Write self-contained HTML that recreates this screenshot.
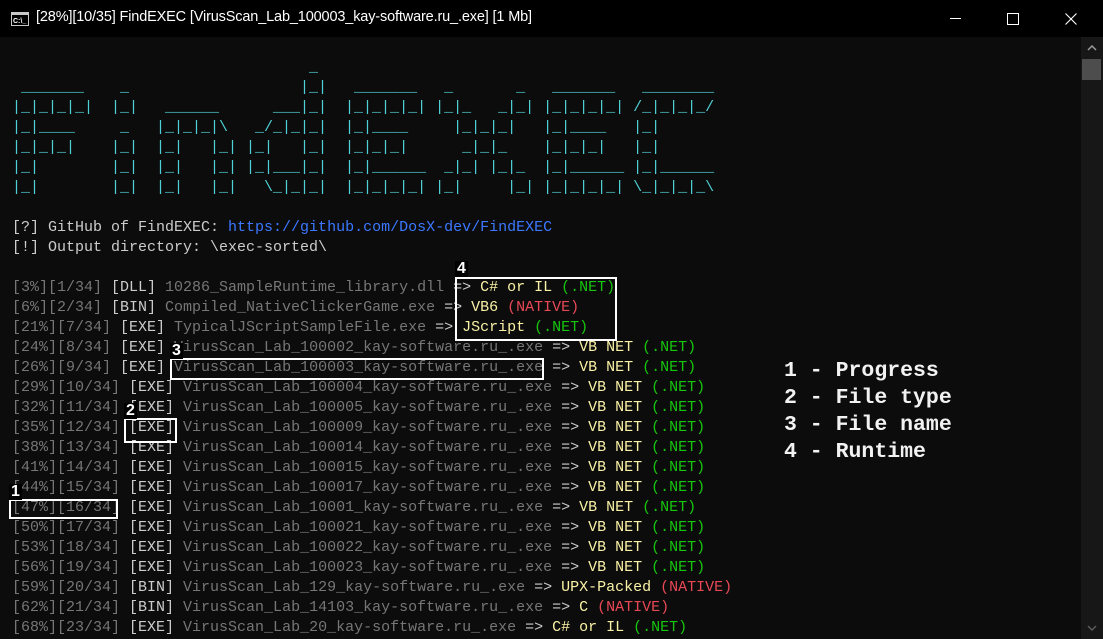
<!DOCTYPE html>
<html><head><meta charset="utf-8"><style>
html,body{margin:0;padding:0;}
body{width:1103px;height:639px;background:#0c0c0c;position:relative;overflow:hidden;font-family:"Liberation Mono",monospace;}
#tb{position:absolute;left:0;top:0;width:1103px;height:37px;background:#000;}
#title{position:absolute;left:36px;top:9px;color:#fff;font:14.5px "Liberation Sans",sans-serif;white-space:pre;letter-spacing:-0.15px;}
.l{position:absolute;left:12px;white-space:pre;font-size:15px;line-height:20px;height:20px;color:#cccccc;}
.art{color:#4fd0d6;}
.d{color:#767676}.w{color:#cccccc}.y{color:#f9f1a5}.g{color:#16c60c}.r{color:#e74856}.b{color:#3b78ff}
.box{position:absolute;border:2px solid #fff;box-sizing:border-box;}
.num{position:absolute;background:#000;color:#fff;font:bold 16px "Liberation Sans",sans-serif;line-height:16px;padding:0 2px;}
#leg{position:absolute;left:784px;top:358px;color:#f2f2f2;font:bold 21.5px "Liberation Mono",monospace;line-height:27px;white-space:pre;}
#sb{position:absolute;left:1081px;top:37px;width:22px;height:602px;background:#171717;}
</style></head><body>
<div id="tb">
<svg style="position:absolute;left:11px;top:12px" width="18" height="14" viewBox="0 0 18 14"><rect x="0.5" y="0.5" width="17" height="13" fill="#000" stroke="#c8c8c8"/><rect x="1" y="1" width="16" height="2" fill="#c8c8c8"/><text x="2" y="11" fill="#fff" font-size="7" font-family="Liberation Sans" font-weight="bold">C:\_</text></svg>
<div id="title">[28%][10/35] FindEXEC [VirusScan_Lab_100003_kay-software.ru_.exe] [1 Mb]</div>
<div style="position:absolute;left:950px;top:18px;width:11px;height:1px;background:#fff"></div>
<div style="position:absolute;left:1007px;top:13px;width:10px;height:10px;border:1px solid #fff"></div>
<svg style="position:absolute;left:1065px;top:13px" width="12" height="12"><path d="M0.5 0.5L11.5 11.5M11.5 0.5L0.5 11.5" stroke="#fff" stroke-width="1.1"/></svg>
</div>
<div id="sb">
<svg style="position:absolute;left:6px;top:8px" width="10" height="6"><path d="M1 5L5 1L9 5" stroke="#9a9a9a" stroke-width="1.5" fill="none"/></svg>
<div style="position:absolute;left:1px;top:22px;width:19px;height:21px;background:#4d4d4d"></div>
<svg style="position:absolute;left:6px;top:588px" width="10" height="6"><path d="M1 1L5 5L9 1" stroke="#5a5a5a" stroke-width="1.5" fill="none"/></svg>
</div>

<div class="l art" style="top:58px">                                 _</div>
<div class="l art" style="top:78px"> _______    _                   |_|   _______   _       _   _______   ________</div>
<div class="l art" style="top:98px">|_|_|_|_|  |_|   ______      ___|_|  |_|_|_|_| |_|_   _|_| |_|_|_|_| /_|_|_|_/</div>
<div class="l art" style="top:118px">|_|____     _   |_|_|_|\   _/_|_|_|  |_|____     |_|_|_|   |_|____   |_|</div>
<div class="l art" style="top:138px">|_|_|_|    |_|  |_|   |_| |_|   |_|  |_|_|_|      _|_|_    |_|_|_|   |_|</div>
<div class="l art" style="top:158px">|_|        |_|  |_|   |_| |_|___|_|  |_|______  _|_| |_|_  |_|______ |_|______</div>
<div class="l art" style="top:178px">|_|        |_|  |_|   |_|   \_|_|_|  |_|_|_|_| |_|     |_| |_|_|_|_| \_|_|_|_\</div>

<div class="l" style="top:218px">[?] GitHub of FindEXEC: <span class="b">https://github.com/DosX-dev/FindEXEC</span></div>
<div class="l" style="top:238px">[!] Output directory: \exec-sorted\</div>

<div class="l" style="top:278px"><span class="d">[3%][1/34]</span> [DLL] <span class="d">10286_SampleRuntime_library.dll</span> => <span class="y">C# or IL</span> <span class="g">(.NET)</span></div>
<div class="l" style="top:298px"><span class="d">[6%][2/34]</span> [BIN] <span class="d">Compiled_NativeClickerGame.exe</span> => <span class="y">VB6</span> <span class="r">(NATIVE)</span></div>
<div class="l" style="top:318px"><span class="d">[21%][7/34]</span> [EXE] <span class="d">TypicalJScriptSampleFile.exe</span> => <span class="y">JScript</span> <span class="g">(.NET)</span></div>
<div class="l" style="top:338px"><span class="d">[24%][8/34]</span> [EXE] <span class="d">VirusScan_Lab_100002_kay-software.ru_.exe</span> => <span class="y">VB NET</span> <span class="g">(.NET)</span></div>
<div class="l" style="top:358px"><span class="d">[26%][9/34]</span> [EXE] <span class="d">VirusScan_Lab_100003_kay-software.ru_.exe</span> => <span class="y">VB NET</span> <span class="g">(.NET)</span></div>
<div class="l" style="top:378px"><span class="d">[29%][10/34]</span> [EXE] <span class="d">VirusScan_Lab_100004_kay-software.ru_.exe</span> => <span class="y">VB NET</span> <span class="g">(.NET)</span></div>
<div class="l" style="top:398px"><span class="d">[32%][11/34]</span> [EXE] <span class="d">VirusScan_Lab_100005_kay-software.ru_.exe</span> => <span class="y">VB NET</span> <span class="g">(.NET)</span></div>
<div class="l" style="top:418px"><span class="d">[35%][12/34]</span> [EXE] <span class="d">VirusScan_Lab_100009_kay-software.ru_.exe</span> => <span class="y">VB NET</span> <span class="g">(.NET)</span></div>
<div class="l" style="top:438px"><span class="d">[38%][13/34]</span> [EXE] <span class="d">VirusScan_Lab_100014_kay-software.ru_.exe</span> => <span class="y">VB NET</span> <span class="g">(.NET)</span></div>
<div class="l" style="top:458px"><span class="d">[41%][14/34]</span> [EXE] <span class="d">VirusScan_Lab_100015_kay-software.ru_.exe</span> => <span class="y">VB NET</span> <span class="g">(.NET)</span></div>
<div class="l" style="top:478px"><span class="d">[44%][15/34]</span> [EXE] <span class="d">VirusScan_Lab_100017_kay-software.ru_.exe</span> => <span class="y">VB NET</span> <span class="g">(.NET)</span></div>
<div class="l" style="top:498px"><span class="d">[47%][16/34]</span> [EXE] <span class="d">VirusScan_Lab_10001_kay-software.ru_.exe</span> => <span class="y">VB NET</span> <span class="g">(.NET)</span></div>
<div class="l" style="top:518px"><span class="d">[50%][17/34]</span> [EXE] <span class="d">VirusScan_Lab_100021_kay-software.ru_.exe</span> => <span class="y">VB NET</span> <span class="g">(.NET)</span></div>
<div class="l" style="top:538px"><span class="d">[53%][18/34]</span> [EXE] <span class="d">VirusScan_Lab_100022_kay-software.ru_.exe</span> => <span class="y">VB NET</span> <span class="g">(.NET)</span></div>
<div class="l" style="top:558px"><span class="d">[56%][19/34]</span> [EXE] <span class="d">VirusScan_Lab_100023_kay-software.ru_.exe</span> => <span class="y">VB NET</span> <span class="g">(.NET)</span></div>
<div class="l" style="top:578px"><span class="d">[59%][20/34]</span> [BIN] <span class="d">VirusScan_Lab_129_kay-software.ru_.exe</span> => <span class="y">UPX-Packed</span> <span class="r">(NATIVE)</span></div>
<div class="l" style="top:598px"><span class="d">[62%][21/34]</span> [BIN] <span class="d">VirusScan_Lab_14103_kay-software.ru_.exe</span> => <span class="y">C</span> <span class="r">(NATIVE)</span></div>
<div class="l" style="top:618px"><span class="d">[68%][23/34]</span> [EXE] <span class="d">VirusScan_Lab_20_kay-software.ru_.exe</span> => <span class="y">C# or IL</span> <span class="g">(.NET)</span></div>

<div class="box" style="left:455px;top:277px;width:162px;height:64px"></div>
<div class="num" style="left:455px;top:261px">4</div>
<div class="box" style="left:170px;top:358px;width:374px;height:22px"></div>
<div class="num" style="left:170px;top:343px">3</div>
<div class="box" style="left:124px;top:418px;width:53px;height:25px"></div>
<div class="num" style="left:124px;top:403px">2</div>
<div class="box" style="left:9px;top:499px;width:109px;height:20px"></div>
<div class="num" style="left:9px;top:484px">1</div>

<div id="leg">1 - Progress
2 - File type
3 - File name
4 - Runtime</div>
</body></html>
